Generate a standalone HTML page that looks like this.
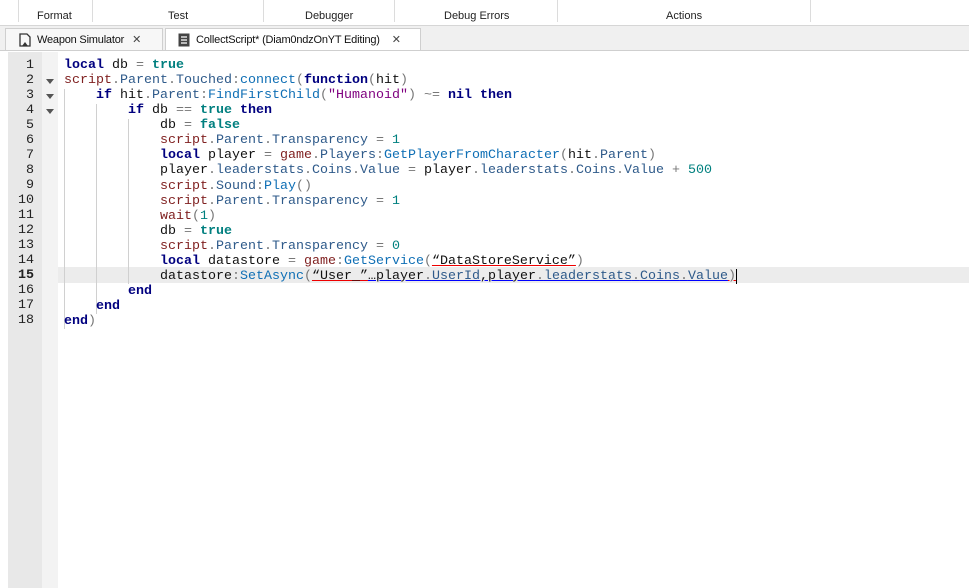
<!DOCTYPE html>
<html><head><style>
body{margin:0;width:969px;height:588px;overflow:hidden;background:#fff;font-family:"Liberation Sans",sans-serif;position:relative}
.top{position:absolute;left:0;top:0;width:969px;height:25px;background:#fff;border-bottom:1px solid #d6d6d6}
.sep{position:absolute;top:0;height:22px;width:1px;background:#dcdcdc}
.lbl{position:absolute;top:10px;font-size:11px;color:#222}
.tabs{position:absolute;left:0;top:26px;width:969px;height:24px;background:#f0f0f0;border-bottom:1px solid #cfcfcf}
.tab{position:absolute;top:2px;height:22px;font-size:11px;letter-spacing:-0.2px;white-space:nowrap;color:#111;line-height:22px;box-sizing:border-box;border:1px solid #cfcfcf;border-bottom:none}
.gut{position:absolute;left:8px;top:52px;width:34px;height:536px;background:#e8e8e8}
.fold{position:absolute;left:42px;top:52px;width:16px;height:536px;background:#f3f3f3}
.code{position:absolute;left:0;top:58px;font-family:"Liberation Mono",monospace;font-size:13.33px;line-height:15.06px;white-space:pre}
.ln{position:absolute;left:8px;width:26px;text-align:right;font-family:"Liberation Mono",monospace;font-size:13.33px;color:#222;margin-top:2px}
.k{color:#00007f;font-weight:bold}.b{color:#007f7f;font-weight:bold}.g{color:#7f1f1f}.p{color:#2e5a8a}.m{color:#0f6fb5}.s{color:#7f007f}.n{color:#00807f}.o{color:#777}.t{color:#111}
.guide{position:absolute;width:1px;background:#d0d0d0}
.tri{position:absolute;left:46px;width:0;height:0;border-left:4px solid transparent;border-right:4px solid transparent;border-top:5px solid #555}
</style></head><body>
<div class="top">
<div class="sep" style="left:18px"></div><div class="sep" style="left:92px"></div><div class="sep" style="left:263px"></div><div class="sep" style="left:394px"></div><div class="sep" style="left:557px"></div><div class="sep" style="left:810px"></div>
<div class="lbl" style="left:37px">Format</div><div class="lbl" style="left:168px">Test</div><div class="lbl" style="left:305px">Debugger</div><div class="lbl" style="left:444px">Debug Errors</div><div class="lbl" style="left:666px">Actions</div>
</div>
<div class="tabs">
<div class="tab" style="left:5px;width:158px;background:#f7f7f7;padding-left:14px"><svg style="position:absolute;left:13px;top:4px" width="13" height="14" viewBox="0 0 13 14"><path d="M1 1h7l3 3v9H1z" fill="none" stroke="#333" stroke-width="1.3"/><path d="M3 13l3-4 3 4z" fill="#333"/></svg><span style="margin-left:17px">Weapon Simulator</span><span style="margin-left:8px;color:#444">✕</span></div>
<div class="tab" style="left:165px;width:256px;background:#fff;padding-left:10px"><svg style="position:absolute;left:12px;top:4px" width="12" height="14" viewBox="0 0 12 14"><rect x="0.5" y="0.5" width="11" height="13" fill="#444"/><path d="M3 4h6M3 7h6M3 10h6" stroke="#fff" stroke-width="1.2"/></svg><span style="margin-left:20px">CollectScript* (Diam0ndzOnYT Editing)</span><span style="margin-left:12px;color:#444">✕</span></div>
</div>
<div class="gut"></div><div class="fold"></div>
<div style="position:absolute;left:58px;top:267px;width:911px;height:16px;background:#ececec"></div>
<div class="guide" style="left:64px;top:89px;height:240px"></div>
<div class="guide" style="left:96px;top:104px;height:210px"></div>
<div class="guide" style="left:128px;top:119px;height:165px"></div>
<div class="tri" style="top:79px"></div><div class="tri" style="top:94px"></div><div class="tri" style="top:109px"></div>
<div class="ln" style="top:56px">1</div><div class="ln" style="top:71px">2</div><div class="ln" style="top:86px">3</div><div class="ln" style="top:101px">4</div><div class="ln" style="top:116px">5</div><div class="ln" style="top:131px">6</div><div class="ln" style="top:146px">7</div><div class="ln" style="top:161px">8</div><div class="ln" style="top:176px">9</div><div class="ln" style="top:191px">10</div><div class="ln" style="top:206px">11</div><div class="ln" style="top:221px">12</div><div class="ln" style="top:236px">13</div><div class="ln" style="top:251px">14</div><div class="ln" style="top:266px;font-weight:bold">15</div><div class="ln" style="top:281px">16</div><div class="ln" style="top:296px">17</div><div class="ln" style="top:311px">18</div>
<div class="code" style="left:64px"><span class="k">local</span> <span class="t">db</span> <span class="o">=</span> <span class="b">true</span>
<span class="g">script</span><span class="o">.</span><span class="p">Parent</span><span class="o">.</span><span class="p">Touched</span><span class="o">:</span><span class="m">connect</span><span class="o">(</span><span class="k">function</span><span class="o">(</span><span class="t">hit</span><span class="o">)</span>
    <span class="k">if</span> <span class="t">hit</span><span class="o">.</span><span class="p">Parent</span><span class="o">:</span><span class="m">FindFirstChild</span><span class="o">(</span><span class="s">"Humanoid"</span><span class="o">) ~=</span> <span class="k">nil</span> <span class="k">then</span>
        <span class="k">if</span> <span class="t">db</span> <span class="o">==</span> <span class="b">true</span> <span class="k">then</span>
            <span class="t">db</span> <span class="o">=</span> <span class="b">false</span>
            <span class="g">script</span><span class="o">.</span><span class="p">Parent</span><span class="o">.</span><span class="p">Transparency</span> <span class="o">=</span> <span class="n">1</span>
            <span class="k">local</span> <span class="t">player</span> <span class="o">=</span> <span class="g">game</span><span class="o">.</span><span class="p">Players</span><span class="o">:</span><span class="m">GetPlayerFromCharacter</span><span class="o">(</span><span class="t">hit</span><span class="o">.</span><span class="p">Parent</span><span class="o">)</span>
            <span class="t">player</span><span class="o">.</span><span class="p">leaderstats</span><span class="o">.</span><span class="p">Coins</span><span class="o">.</span><span class="p">Value</span> <span class="o">=</span> <span class="t">player</span><span class="o">.</span><span class="p">leaderstats</span><span class="o">.</span><span class="p">Coins</span><span class="o">.</span><span class="p">Value</span> <span class="o">+</span> <span class="n">500</span>
            <span class="g">script</span><span class="o">.</span><span class="p">Sound</span><span class="o">:</span><span class="m">Play</span><span class="o">()</span>
            <span class="g">script</span><span class="o">.</span><span class="p">Parent</span><span class="o">.</span><span class="p">Transparency</span> <span class="o">=</span> <span class="n">1</span>
            <span class="g">wait</span><span class="o">(</span><span class="n">1</span><span class="o">)</span>
            <span class="t">db</span> <span class="o">=</span> <span class="b">true</span>
            <span class="g">script</span><span class="o">.</span><span class="p">Parent</span><span class="o">.</span><span class="p">Transparency</span> <span class="o">=</span> <span class="n">0</span>
            <span class="k">local</span> <span class="t">datastore</span> <span class="o">=</span> <span class="g">game</span><span class="o">:</span><span class="m">GetService</span><span class="o">(</span><span class="t" style="text-decoration:underline;text-decoration-color:#e00">“DataStoreService”</span><span class="o">)</span>
            <span class="t">datastore</span><span class="o">:</span><span class="m">SetAsync</span><span class="o">(</span><span class="t" style="text-decoration:underline;text-decoration-color:#e00">“User_”</span><span class="t" style="text-decoration:underline;text-decoration-color:#00f">…player<span class="o">.</span><span class="p">UserId</span>,player<span class="o">.</span><span class="p">leaderstats</span><span class="o">.</span><span class="p">Coins</span><span class="o">.</span><span class="p">Value</span></span><span class="o" style="text-decoration:underline;text-decoration-color:#e00">)</span><span style="border-left:1px solid #000"></span>
        <span class="k">end</span>
    <span class="k">end</span>
<span class="k">end</span><span class="o">)</span></div>
</body></html>
